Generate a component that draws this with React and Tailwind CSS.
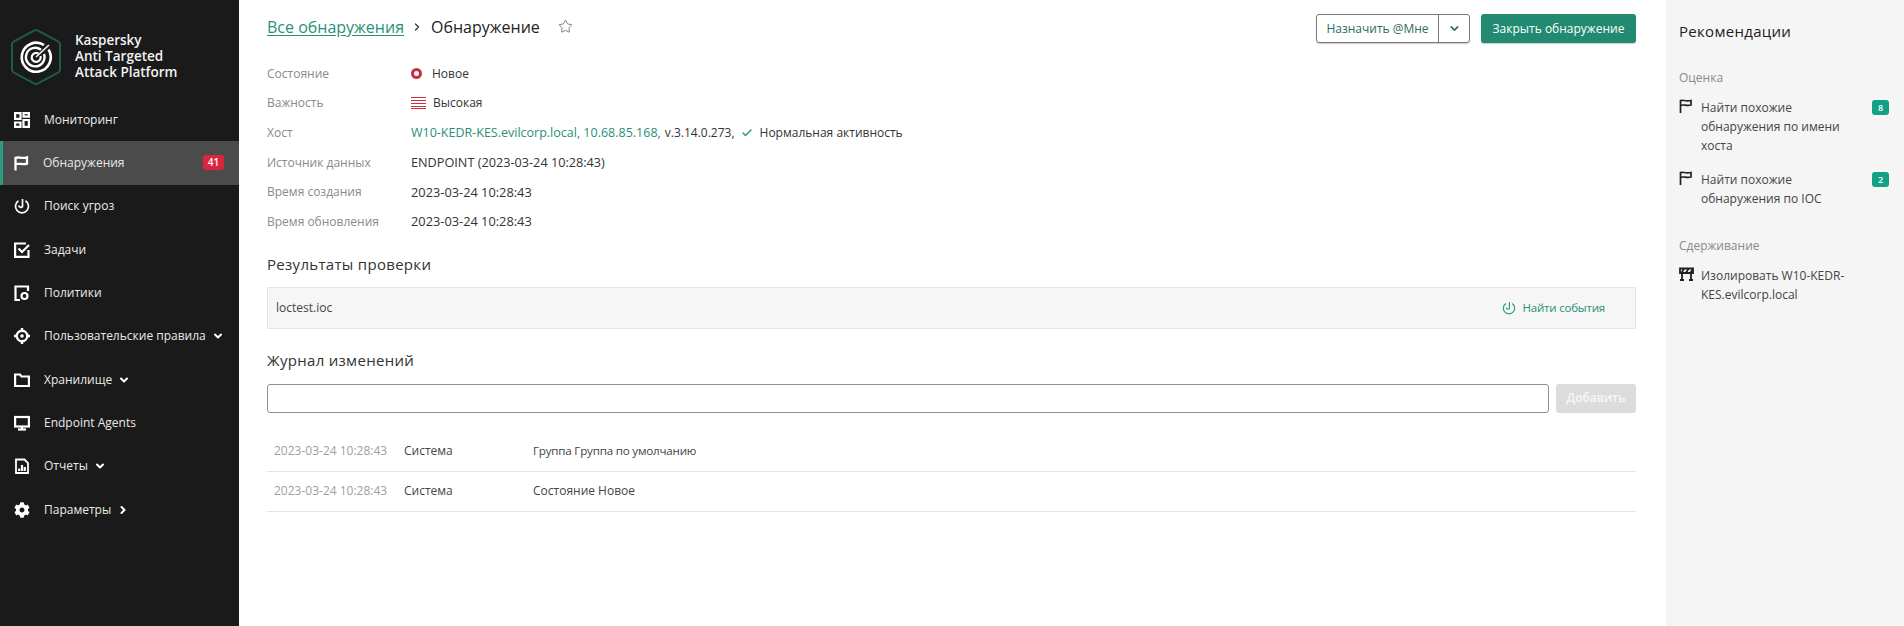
import React from 'react';
import { ChevronDown, ChevronRight, Star, Check } from 'lucide-react';
import { FaCog } from 'react-icons/fa';

function LogoMark() {
  return (
    <svg width="52" height="58" viewBox="0 0 52 58" fill="none" className="shrink-0">
      <path d="M24.500 2.300Q26 1.500 27.500 2.300L48.500 13.700Q50 14.500 50 16.200V41.800Q50 43.500 48.500 44.300L27.500 55.700Q26 56.500 24.500 55.700L3.500 44.300Q2 43.500 2 41.800V16.200Q2 14.500 3.500 13.700Z" stroke="#1e5a4b" strokeWidth="2" />
      <g stroke="#fff" fill="none">
        <path d="M34 17A14.500 14.500 0 1 0 38.500 21.500" strokeWidth="2.600" />
        <path d="M31 21.800A9.300 9.300 0 1 0 34 26" strokeWidth="2.400" />
        <path d="M28.500 25.500A4.500 4.500 0 1 0 30.500 28" strokeWidth="2.200" />
        <path d="M26 29 39 17" strokeWidth="1.500" />
      </g>
    </svg>
  );
}

const icons = {
  grid: (
    <svg width="16" height="16" viewBox="0 0 16 16" fill="none" stroke="#fff" strokeWidth="2.200">
      <rect x="1.100" y="1.100" width="5.400" height="5.800" />
      <path d="M9.500 1.100h5.400v3.600h-5.400z" />
      <path d="M1.100 10.500h5.400v4.400h-5.400z" />
      <path d="M9.500 8h5.400v6.900h-5.400z" />
    </svg>
  ),
  flag: (
    <svg width="16" height="16" viewBox="0 0 16 16" fill="none" stroke="#fff" strokeWidth="2.300">
      <path d="M2.500 15.500V2.800C6 1.600 9 4 14 2.300V8.600C10 10.200 6.500 7.800 2.500 9.200" />
    </svg>
  ),
  hunt: (
    <svg width="16" height="16" viewBox="0 0 16 16" fill="none" stroke="#fff" strokeWidth="1.700">
      <path d="M4.500 2.800A6.500 6.500 0 1 0 11.500 2.800" />
      <path d="M8.500 1V8.700A2.300 2.300 0 0 1 4.700 7.500" />
    </svg>
  ),
  task: (
    <svg width="16" height="16" viewBox="0 0 16 16" fill="none" stroke="#fff" strokeWidth="2.200">
      <path d="M14.500 8V14.900H1.100V1.500H12" />
      <path d="M4.500 6.500 8 10 15 3" />
    </svg>
  ),
  policy: (
    <svg width="16" height="16" viewBox="0 0 16 16" fill="none" stroke="#fff" strokeWidth="2.200">
      <path d="M14 6V1.500H1.500V15H6" />
      <circle cx="10.500" cy="11" r="3" />
    </svg>
  ),
  rules: (
    <svg width="16" height="16" viewBox="0 0 16 16" fill="none" stroke="#fff" strokeWidth="2.400">
      <circle cx="8" cy="8" r="5.300" />
      <circle cx="8" cy="8" r="1.800" fill="#fff" stroke="none" />
      <path d="M8 0V2.500M8 13.500V16M0 8H2.500M13.500 8H16" />
    </svg>
  ),
  folder: (
    <svg width="16" height="16" viewBox="0 0 16 16" fill="none" stroke="#fff" strokeWidth="2.200">
      <path d="M1.100 2.500H6L7.500 4.500H14.900V14H1.100Z" />
    </svg>
  ),
  monitor: (
    <svg width="16" height="16" viewBox="0 0 16 16" fill="none" stroke="#fff" strokeWidth="2.200">
      <rect x="1.100" y="2" width="13.800" height="9.500" />
      <path d="M4 14.500H12" />
      <path d="M8 11.500V14" />
    </svg>
  ),
  report: (
    <svg width="16" height="16" viewBox="0 0 16 16" fill="none" stroke="#fff" strokeWidth="1.800">
      <path d="M2 1.500H10.500L14 5V15H2Z" />
      <path d="M5.200 13V10.500M8 13V7M10.800 13V9" strokeWidth="2.200" />
    </svg>
  ),
};

function NavItem({ icon, label, active, badge, caret }) {
  return (
    <div
      className={
        'flex items-center h-[43.33px] text-[12px] text-[#eaeaea] ' +
        (active ? 'bg-[#4b4b4b] border-l-[3px] border-[#2a9d80] pl-[10px]' : 'pl-[14px]')
      }
    >
      <span className="w-4 h-4 flex items-center justify-center shrink-0">{icon}</span>
      <span className="ml-[14px]">{label}</span>
      {caret === 'down' && <ChevronDown size={12} strokeWidth={4} className="ml-[6px] text-white" />}
      {caret === 'right' && <ChevronRight size={12} strokeWidth={4} className="ml-[6px] text-white" />}
      {badge && (
        <span className="ml-auto mr-[15px] h-[15px] w-[21px] rounded-[3px] bg-[#d9263f] text-white text-[10px] font-semibold flex items-center justify-center">
          {badge}
        </span>
      )}
    </div>
  );
}

function Sidebar() {
  return (
    <aside className="w-[239px] shrink-0 bg-[#1a1a1a] h-full">
      <div className="flex items-center h-[98px] pl-[10px] pt-[15px]">
        <LogoMark />
        <div className="ml-[13px] -mt-[2px] text-[13.500px] leading-[16px] font-semibold text-[#f2f2f2]">
          Kaspersky
          <br />
          Anti Targeted
          <br />
          Attack Platform
        </div>
      </div>
      <nav>
        <NavItem icon={icons.grid} label="Мониторинг" />
        <NavItem icon={icons.flag} label="Обнаружения" active badge="41" />
        <NavItem icon={icons.hunt} label="Поиск угроз" />
        <NavItem icon={icons.task} label="Задачи" />
        <NavItem icon={icons.policy} label="Политики" />
        <NavItem icon={icons.rules} label="Пользовательские правила" caret="down" />
        <NavItem icon={icons.folder} label="Хранилище" caret="down" />
        <NavItem icon={icons.monitor} label="Endpoint Agents" />
        <NavItem icon={icons.report} label="Отчеты" caret="down" />
        <NavItem icon={<FaCog size={16} color="#fff" />} label="Параметры" caret="right" />
      </nav>
    </aside>
  );
}

function InfoRow({ label, children }) {
  return (
    <div className="flex items-center h-[29.6px]">
      <div className="w-[144px] shrink-0 text-[#8a8a8a]">{label}</div>
      <div className="flex items-center text-[#333]">{children}</div>
    </div>
  );
}

function SeverityIcon() {
  return (
    <span className="w-[15px] h-[12px] mr-[7px] flex flex-col justify-between">
      <span className="h-[1px] bg-[#c9303f]" />
      <span className="h-[1px] bg-[#c9303f]" />
      <span className="h-[1px] bg-[#c9303f]" />
      <span className="h-[1px] bg-[#c9303f]" />
      <span className="h-[1px] bg-[#c9303f]" />
    </span>
  );
}

function HuntIcon() {
  return (
    <svg width="14" height="14" viewBox="0 0 16 16" fill="none" stroke="#2a9d80" strokeWidth="1.300">
      <path d="M4.500 2.800A6.500 6.500 0 1 0 11.500 2.800" />
      <path d="M8.500 1V8.700A2.300 2.300 0 0 1 4.700 7.500" />
    </svg>
  );
}

function LogRow({ time, children }) {
  return (
    <div className="flex items-center h-[40px] border-b border-[#e4e4e4] pl-[7px]">
      <div className="w-[130px] shrink-0 text-[#a0a0a0]">{time}</div>
      <div className="w-[129px] shrink-0 text-[#444]">Система</div>
      <div className="text-[#444]">{children}</div>
    </div>
  );
}

function Main() {
  return (
    <main className="flex-1 min-w-0 pl-[28px] pr-[30px] text-[12px]">
      <div className="flex items-center h-[43px] mt-[5px]">
        <a className="text-[16px] text-[#2a8f78] underline underline-offset-2">Все обнаружения</a>
        <ChevronRight size={12} strokeWidth={2.500} className="mx-[7px] text-[#333]" />
        <span className="text-[16px] text-[#222] ml-[1px]">Обнаружение</span>
        <Star size={15} strokeWidth={1.300} className="ml-[18px] text-[#666]" />
        <div className="ml-auto mt-[4px] flex items-center gap-[11px]">
          <div className="flex h-[29px] rounded-[3px] border border-[#7a7a7a] shadow-[0_1px_1px_rgba(0,0,0,0.2)] text-[#2c6e60]">
            <span className="w-[121px] flex items-center justify-center">Назначить @Мне</span>
            <span className="w-[31px] flex items-center justify-center border-l border-[#7a7a7a]">
              <ChevronDown size={13} strokeWidth={3} />
            </span>
          </div>
          <div className="h-[29px] w-[155px] rounded-[3px] bg-[#218a70] shadow-[0_1px_1px_rgba(0,0,0,0.2)] text-white flex items-center justify-center">
            Закрыть обнаружение
          </div>
        </div>
      </div>

      <div className="mt-[11px]">
        <InfoRow label="Состояние">
          <span className="w-[11px] h-[11px] rounded-full border-[3px] border-[#c9303f] mr-[10px]" />
          Новое
        </InfoRow>
        <InfoRow label="Важность">
          <SeverityIcon />
          Высокая
        </InfoRow>
        <InfoRow label="Хост">
          <span className="text-[#2a8f78] text-[12.500px]">W10-KEDR-KES.evilcorp.local, 10.68.85.168,</span>
          <span className="ml-[4px]">v.3.14.0.273,</span>
          <Check size={12} strokeWidth={3} className="ml-[6px] text-[#2a9d80]" />
          <span className="ml-[7px]">Нормальная активность</span>
        </InfoRow>
        <InfoRow label="Источник данных">
          <span className="text-[12.700px]">ENDPOINT (2023-03-24 10:28:43)</span>
        </InfoRow>
        <InfoRow label="Время создания">
          <span className="text-[12.800px]">2023-03-24 10:28:43</span>
        </InfoRow>
        <InfoRow label="Время обновления">
          <span className="text-[12.800px]">2023-03-24 10:28:43</span>
        </InfoRow>
      </div>

      <h2 className="mt-[16.400px] text-[15px] leading-[22px] text-[#333] tracking-[0.3px]">Результаты проверки</h2>
      <div className="mt-[12px] h-[42px] flex items-center bg-[#f6f6f6] border border-[#e6e6e6] pl-[8px] pr-[30px] text-[#444]">
        loctest.ioc
        <span className="ml-auto flex items-center text-[#2a8f78]">
          <HuntIcon />
          <span className="ml-[7px] text-[11.500px] tracking-[-0.2px]">Найти события</span>
        </span>
      </div>

      <h2 className="mt-[20px] text-[15px] leading-[22px] text-[#333] tracking-[0.3px]">Журнал изменений</h2>
      <div className="mt-[13px] flex gap-[7px]">
        <input className="flex-1 h-[29px] rounded-[3px] border border-[#8f8f8f] bg-white" />
        <div className="w-[80px] h-[29px] rounded-[3px] bg-[#dcdcdc] text-[#f7f7f7] flex items-center justify-center font-semibold">
          Добавить
        </div>
      </div>

      <div className="mt-[19px]">
        <LogRow time="2023-03-24 10:28:43">
          <span className="text-[11.600px] tracking-[-0.2px]">Группа Группа по умолчанию</span>
        </LogRow>
        <LogRow time="2023-03-24 10:28:43">Состояние Новое</LogRow>
      </div>
    </main>
  );
}

function RecFlag() {
  return (
    <svg width="13" height="14" viewBox="0 0 13 14" fill="none" stroke="#222" strokeWidth="1.700" className="shrink-0 mt-[1px]">
      <path d="M1.500 14V1.500C4 .5 6.500 2.800 12 1.500V6C7 7.200 5 5 1.500 6.500" />
    </svg>
  );
}

function Barrier() {
  return (
    <svg width="15" height="14" viewBox="0 0 15 14" fill="none" stroke="#222" strokeWidth="1.800" className="shrink-0 mt-[1px]">
      <path d="M1 1.500H14V6H1Z" />
      <path d="M5 1.500 2.500 6M9.500 1.500 7 6M14 1.500 11.500 6" />
      <path d="M3 6V13M12 6V13M1 13H5M10 13H14" />
    </svg>
  );
}

function RecItem({ icon, badge, children }) {
  return (
    <div className="flex">
      <span className="w-[22px] shrink-0">{icon}</span>
      <div className="w-[150px] leading-[19px] text-[#444]">{children}</div>
      {badge && (
        <span className="ml-auto h-[15px] w-[17px] mt-[2px] rounded-[3px] bg-[#14a085] text-white text-[9px] font-semibold flex items-center justify-center">
          {badge}
        </span>
      )}
    </div>
  );
}

function Recommendations() {
  return (
    <aside className="w-[238px] shrink-0 bg-[#f5f5f5] h-full pl-[13px] pr-[15px] text-[12px]">
      <h2 className="mt-[20px] text-[15px] leading-[22px] text-[#222] tracking-[0.3px]">Рекомендации</h2>
      <div className="mt-[26px] text-[#8a8a8a] leading-[20px]">Оценка</div>
      <div className="mt-[10px]">
        <RecItem icon={<RecFlag />} badge="8">
          Найти похожие обнаружения по имени хоста
        </RecItem>
      </div>
      <div className="mt-[15px]">
        <RecItem icon={<RecFlag />} badge="2">
          Найти похожие обнаружения по IOC
        </RecItem>
      </div>
      <div className="mt-[28px] text-[#8a8a8a] leading-[20px]">Сдерживание</div>
      <div className="mt-[10px]">
        <RecItem icon={<Barrier />}>Изолировать W10-KEDR-KES.evilcorp.local</RecItem>
      </div>
    </aside>
  );
}

export default function App() {
  return (
    <div className="flex h-screen overflow-hidden bg-white font-['Open_Sans',sans-serif]">
      <Sidebar />
      <Main />
      <Recommendations />
    </div>
  );
}
